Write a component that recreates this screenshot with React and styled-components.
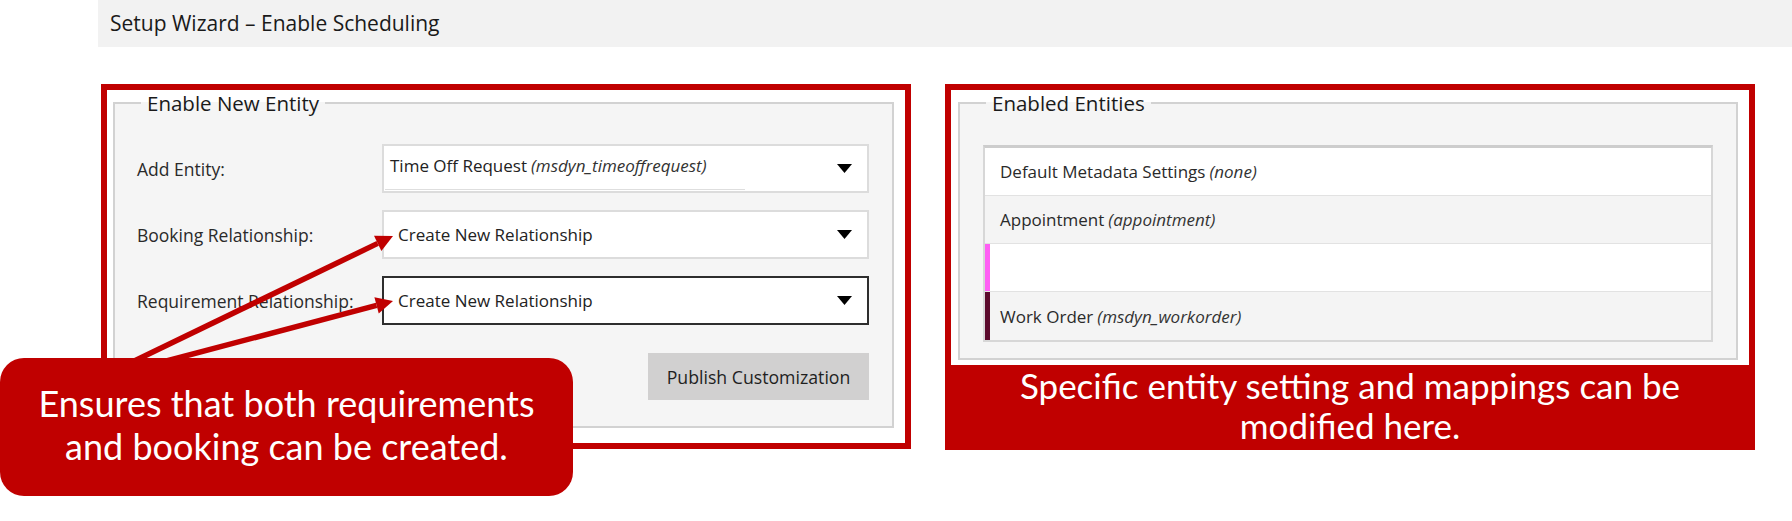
import styled, { createGlobalStyle } from "styled-components";

const GlobalStyle = createGlobalStyle`
  body {
    margin: 0;
    background: #fff;
    font-family: "Open Sans", "Noto Sans", sans-serif;
    color: #1f1f1f;
  }
`;

const RED = "#c00000";

const Page = styled.div`
  position: relative;
  width: 1792px;
  height: 521px;
  overflow: hidden;
`;

const Header = styled.header`
  margin-left: 98px;
  height: 47px;
  background: #f2f2f2;
  display: flex;
  align-items: center;
  padding-left: 12px;
  padding-bottom: 2px;
  box-sizing: border-box;
  font-size: 21px;
  color: #1a1a1a;
`;

const Panels = styled.main`
  display: flex;
  align-items: flex-start;
  gap: 34px;
  padding: 37px 0 0 101px;
`;

const Frame = styled.section`
  width: 810px;
  box-sizing: border-box;
  background: ${RED};
  padding: 6px;
  display: flex;
  flex-direction: column;
`;

const Sheet = styled.div`
  background: #fff;
  padding: ${(p) => p.$pad};
`;

const Group = styled.fieldset`
  margin: 0;
  min-width: 0;
  border: 2px solid #d2d2d2;
  background: #f5f5f5;
  padding: ${(p) => p.$pad};
`;

const Legend = styled.legend`
  margin-left: ${(p) => p.$offset}px;
  padding: 0 6px;
  font-size: 20.5px;
  line-height: 26px;
  color: #1a1a1a;
`;

const Form = styled.div`
  display: grid;
  grid-template-columns: 245px 1fr;
  row-gap: 17px;
  align-items: center;
`;

const Label = styled.span`
  font-size: 17.5px;
  color: #2a2a2a;
`;

const Select = styled.div`
  height: 49px;
  box-sizing: border-box;
  border: 2px solid ${(p) => (p.$focused ? "#2e2e2e" : "#dcdcdc")};
  background: #fff;
  display: flex;
  align-items: center;
  justify-content: space-between;
  padding: 0 15px 0 ${(p) => (p.$inset ? 1 : 14)}px;
  font-size: 17px;
  color: #222;
`;

const Entry = styled.div`
  align-self: stretch;
  width: 355px;
  display: flex;
  align-items: center;
  padding: 0 0 5px 5px;
  border-bottom: 1px solid #dedede;
  margin-bottom: 1px;
  white-space: nowrap;
`;

const Hint = styled.i`
  color: #333;
  margin-left: 4px;
`;

const Actions = styled.div`
  display: flex;
  justify-content: flex-end;
  margin-top: 28px;
`;

const Button = styled.button`
  width: 221px;
  height: 47px;
  border: none;
  background: #d1d0d0;
  font-family: "Open Sans", sans-serif;
  font-size: 17.7px;
  color: #1f1f1f;
`;

const List = styled.div`
  border: 2px solid #d7d7d7;
  border-top: 3px solid #cdcdcd;
  background: #fff;
`;

const Row = styled.div`
  height: 48px;
  box-sizing: border-box;
  display: flex;
  align-items: center;
  padding-left: 15px;
  font-size: 17px;
  color: #2a2a2a;
  background: ${(p) => (p.$shade ? "#f4f4f4" : "#fff")};
  border-bottom: 1px solid #e2e2e2;
  box-shadow: ${(p) => (p.$mark ? `inset 5px 0 0 ${p.$mark}` : "none")};
  &:last-child {
    border-bottom: none;
  }
`;

const Caption = styled.p`
  margin: 0;
  height: 79px;
  color: #fff;
  text-align: center;
  font-family: Lato, "Open Sans", sans-serif;
  font-size: 35px;
  line-height: 40px;
  white-space: nowrap;
`;

const Overlay = styled.svg`
  position: absolute;
  left: 0;
  top: 0;
  pointer-events: none;
`;

const Callout = styled.div`
  position: absolute;
  left: 0;
  top: 358px;
  width: 573px;
  height: 138px;
  border-radius: 24px;
  background: ${RED};
  color: #fff;
  display: flex;
  align-items: center;
  justify-content: center;
  text-align: center;
  font-family: Lato, "Open Sans", sans-serif;
  font-size: 36px;
  line-height: 43px;
  padding-bottom: 4px;
  box-sizing: border-box;
  white-space: nowrap;
`;

function Caret() {
  return (
    <svg width="15" height="9" viewBox="0 0 15 9">
      <polygon points="0,0 15,0 7.5,9" fill="#000" />
    </svg>
  );
}

function Arrow({ from, to }) {
  const dx = to[0] - from[0];
  const dy = to[1] - from[1];
  const len = Math.hypot(dx, dy);
  const ux = dx / len;
  const uy = dy / len;
  const bx = to[0] - ux * 17;
  const by = to[1] - uy * 17;
  const nx = -uy * 8.5;
  const ny = ux * 8.5;
  return (
    <g fill={RED} stroke={RED}>
      <line x1={from[0]} y1={from[1]} x2={bx} y2={by} strokeWidth="5.5" />
      <polygon
        stroke="none"
        points={`${to[0]},${to[1]} ${bx + nx},${by + ny} ${bx - nx},${by - ny}`}
      />
    </g>
  );
}

const entities = [
  { name: "Default Metadata Settings", hint: "none" },
  { name: "Appointment", hint: "appointment", shade: true },
  { name: "", mark: "#ff5ef4" },
  { name: "Work Order", hint: "msdyn_workorder", shade: true, mark: "#5c0a2c" },
];

export default function App() {
  return (
    <Page>
      <GlobalStyle />
      <Header>Setup Wizard – Enable Scheduling</Header>
      <Panels>
        <Frame>
          <Sheet $pad="0 11px 15px 6px">
            <Group $pad="28px 23px 26px 22px">
              <Legend $offset={4}>Enable New Entity</Legend>
              <Form>
                <Label>Add Entity:</Label>
                <Select $inset>
                  <Entry>
                    Time Off Request<Hint>(msdyn_timeoffrequest)</Hint>
                  </Entry>
                  <Caret />
                </Select>
                <Label>Booking Relationship:</Label>
                <Select>
                  Create New Relationship
                  <Caret />
                </Select>
                <Label>Requirement Relationship:</Label>
                <Select $focused>
                  Create New Relationship
                  <Caret />
                </Select>
              </Form>
              <Actions>
                <Button>Publish Customization</Button>
              </Actions>
            </Group>
          </Sheet>
        </Frame>
        <Frame>
          <Sheet $pad="0 11px 5px 7px">
            <Group $pad="29px 23px 16px 23px">
              <Legend $offset={3}>Enabled Entities</Legend>
              <List>
                {entities.map((e, i) => (
                  <Row key={i} $shade={e.shade} $mark={e.mark}>
                    {e.name}
                    {e.hint && <Hint>({e.hint})</Hint>}
                  </Row>
                ))}
              </List>
            </Group>
          </Sheet>
          <Caption>
            Specific entity setting and mappings can be
            <br />
            modified here.
          </Caption>
        </Frame>
      </Panels>
      <Overlay width="1792" height="521">
        <Arrow from={[128, 364]} to={[393, 236]} />
        <Arrow from={[155, 364]} to={[393, 301]} />
      </Overlay>
      <Callout>
        <div>
          Ensures that both requirements
          <br />
          and booking can be created.
        </div>
      </Callout>
    </Page>
  );
}
